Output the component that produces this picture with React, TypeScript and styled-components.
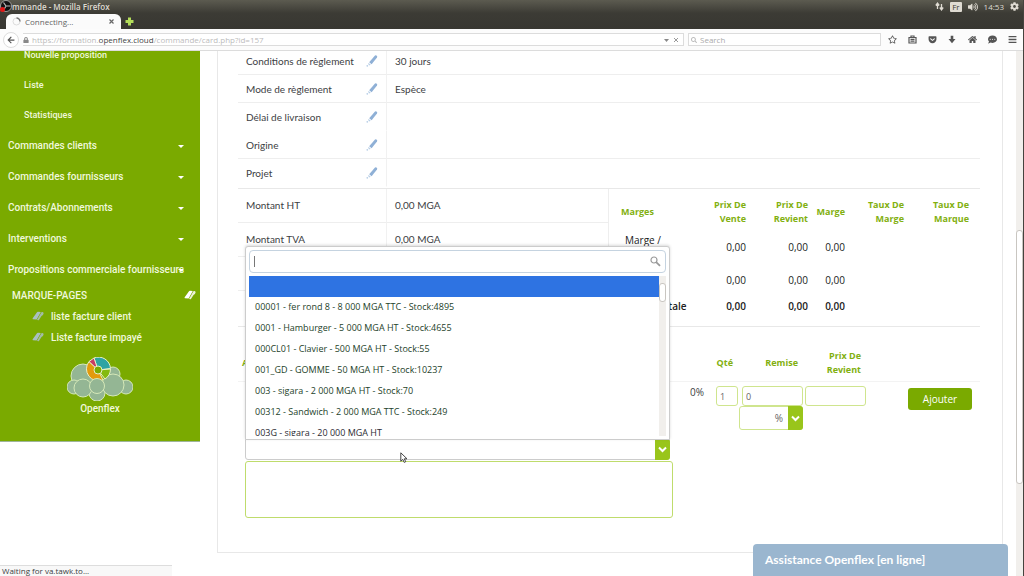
import React from "react";
import styled, { createGlobalStyle, css } from "styled-components";
import { FaRegStar, FaGetPocket, FaHome, FaCommentDots, FaBars, FaArrowLeft, FaLock, FaVolumeUp, FaCog, FaSearch } from "react-icons/fa";

const green = "#7aaa00";
const heading = "#82b010";
const lime = "#99c51b";
const uiFont = `"Open Sans", "Noto Sans", sans-serif`;

const Global = createGlobalStyle`
  * { box-sizing: border-box; }
  html, body, #root { height: 100%; margin: 0; }
  body { background: #fff; font-family: ${uiFont}; font-size: 10px; color: #3c4043; overflow: hidden; }
  button, input, select, textarea { font-family: inherit; font-size: inherit; color: inherit; margin: 0; padding: 0; }
  table { border-spacing: 0; }
  ul { list-style: none; margin: 0; padding: 0; }
  a { color: inherit; text-decoration: none; }
`;

const Window = styled.div`
  display: flex;
  flex-direction: column;
  height: 100vh;
  border-right: 1px solid #45433e;
`;

/* ---------- browser chrome ---------- */
const Chrome = styled.header`
  flex: none;
  background: linear-gradient(#5c5b50, #3c3b35 13px, #33322d);
`;
const TitleBar = styled.div`
  position: relative;
  display: flex;
  align-items: center;
  justify-content: space-between;
  height: 13px;
  padding: 0 4px 0 12px;
  color: #dfdbd2;
  font-size: 8px;
  line-height: 13px;
`;
const Title = styled.span`
  font-weight: 600;
`;
const Recorder = styled.svg`
  position: absolute;
  left: 0;
  top: 0;
`;
const Tray = styled.div`
  display: flex;
  align-items: center;
  gap: 6px;
`;
const Lang = styled.span`
  padding: 0 2px;
  background: #dfdbd2;
  color: #3c3b35;
  border-radius: 1px;
  line-height: 10px;
`;
const Tabs = styled.div`
  display: flex;
  align-items: center;
  gap: 4px;
  height: 16px;
  padding-left: 6px;
`;
const Tab = styled.div`
  display: flex;
  align-items: center;
  gap: 4px;
  width: 115px;
  height: 15px;
  align-self: flex-end;
  padding: 0 7px 0 6px;
  background: #fbfbfb;
  border-radius: 6px 6px 0 0;
  font-size: 8px;
  color: #666;
`;
const TabLabel = styled.span`
  flex: 1;
`;
const PlainButton = styled.button`
  display: flex;
  align-items: center;
  justify-content: center;
  border: 0;
  background: none;
  color: inherit;
`;
const NavBar = styled.nav`
  display: flex;
  align-items: center;
  gap: 4px;
  height: 22px;
  padding: 0 6px 0 3px;
  background: #fcfcfc;
  border-bottom: 1px solid #dcdcdc;
  color: #555;
`;
const Back = styled(PlainButton)`
  width: 16px;
  height: 16px;
  border: 1px solid #ddd;
  border-radius: 50%;
  background: #fff;
`;
const Field = styled.div<{ $fixed?: boolean }>`
  display: flex;
  align-items: center;
  gap: 3px;
  height: 13px;
  padding: 0 3px 0 2px;
  border: 1px solid #dcdcdc;
  background: #fff;
  font-size: 8px;
  color: #bbb;
  ${(p) => (p.$fixed ? css`flex: 0 0 193px;` : css`flex: 1; border-left: 0; padding-left: 0;`)}
`;
const Url = styled.span`
  flex: 1;
  line-height: 11px;
  b { font-weight: 400; color: #444; }
`;
const SearchInput = styled.input`
  flex: 1;
  min-width: 0;
  border: 0;
  outline: 0;
  background: none;
  &::placeholder { color: #aaa; }
`;
const Tools = styled.div`
  display: flex;
  align-items: center;
  justify-content: space-between;
  width: 132px;
  padding-left: 3px;
`;

/* ---------- page ---------- */
const Page = styled.div`
  position: relative;
  display: flex;
  flex: 1;
  min-height: 0;
  overflow: hidden;
`;
const Sidebar = styled.aside`
  flex: 0 0 200px;
  min-width: 0;
  align-self: flex-start;
  padding-bottom: 24px;
  background: ${green};
  border-bottom: 1px solid #9fb59a;
  color: #f0f8dc;
  font-family: Roboto, sans-serif;
  font-weight: 500;
`;
const Menu = styled.ul`
  margin-top: -11px;
`;
const SubItem = styled.li`
  padding-left: 24px;
  font-size: 9px;
  line-height: 30px;
`;
const MenuItem = styled.li`
  position: relative;
  padding-left: 8px;
  font-size: 10px;
  line-height: 31px;
  white-space: nowrap;
  &::after {
    content: "";
    position: absolute;
    right: 16px;
    top: 15px;
    border: 3px solid transparent;
    border-top-color: #fff;
    border-bottom: 0;
  }
`;
const BookmarkTitle = styled.h2`
  display: flex;
  align-items: center;
  justify-content: space-between;
  margin: 0;
  padding: 0 4px 0 12px;
  font-size: 10px;
  font-weight: 500;
  line-height: 21px;
`;
const Bookmark = styled.li`
  display: flex;
  align-items: center;
  gap: 7px;
  padding-left: 32px;
  font-size: 10px;
  line-height: 21px;
`;
const Brand = styled.div`
  display: flex;
  flex-direction: column;
  align-items: center;
  padding-top: 9px;
  font-size: 10px;
  line-height: 16px;
`;
const Main = styled.main`
  flex: 1;
  min-width: 0;
  padding: 0 13px 0 17px;
`;
const Panel = styled.section`
  padding: 0 22px 34px 20px;
  border: 1px solid #e8e8e8;
  border-top: 0;
`;

const Details = styled.table`
  width: 100%;
  margin-top: -4px;
  table-layout: fixed;
  font-family: Lato, sans-serif;
`;
const Label = styled.th<{ $tall?: boolean; $open?: boolean }>`
  width: 149px;
  height: ${(p) => (p.$tall ? 34 : 28)}px;
  padding: 0 8px ${(p) => (p.$tall ? 2 : 0)}px;
  border-right: 1px solid #f1f1f1;
  border-bottom: 1px solid ${(p) => (p.$open ? "transparent" : "#eee")};
  font-weight: 400;
  text-align: left;
  line-height: 14px;
`;
const LabelRow = styled.div`
  display: flex;
  align-items: center;
  justify-content: space-between;
`;
const Value = styled.td<{ $tall?: boolean; $open?: boolean }>`
  padding: 0 8px ${(p) => (p.$tall ? 2 : 0)}px;
  border-bottom: 1px solid ${(p) => (p.$open ? "transparent" : "#eee")};
  line-height: 14px;
`;
const Split = styled.div`
  display: flex;
  height: 139px;
  margin-top: 1px;
  border-top: 1px solid #e8e8e8;
  border-bottom: 1px solid #e8e8e8;
`;
const Totals = styled.table`
  width: 50%;
  align-self: flex-start;
  border-right: 1px solid #eee;
  table-layout: fixed;
  font-family: Lato, sans-serif;
`;
const Margins = styled.table`
  width: 50%;
  align-self: flex-start;
  margin-top: 4px;
  padding-right: 11px;
  table-layout: fixed;
  text-align: right;
  color: #222;
`;
const HeadCell = styled.th<{ $w?: number; $left?: boolean }>`
  width: ${(p) => (p.$w ? `${p.$w}px` : "auto")};
  height: 37px;
  padding: 0;
  color: ${heading};
  font-size: 9px;
  font-weight: 700;
  line-height: 14px;
  text-align: ${(p) => (p.$left ? "left" : "right")};
  ${(p) => p.$left && css`padding-left: 12px;`}
`;
const Num = styled.td<{ $bold?: boolean }>`
  height: ${(p) => (p.$bold ? 20 : 33)}px;
  padding: 0;
  font-weight: ${(p) => (p.$bold ? 600 : 500)};
  line-height: 14px;
`;
const MarginName = styled(Num)`
  padding-left: 16px;
  text-align: left;
  white-space: nowrap;
`;

const LineForm = styled.table`
  width: 100%;
  margin-top: 18px;
  table-layout: fixed;
`;
const FormHead = styled(HeadCell)<{ $pad?: number }>`
  border-bottom: 1px solid #f3f3f3;
  padding-right: ${(p) => p.$pad ?? 0}px;
  ${(p) => p.$left && css`padding-left: 4px;`}
`;
const FormCell = styled.td`
  padding: 4px 0 0;
  vertical-align: top;
  text-align: right;
`;
const Stack = styled.div`
  display: flex;
  flex-direction: column;
  gap: 1px;
  padding: 53px 16px 0 7px;
  text-align: left;
`;
const Picker = styled.div`
  position: relative;
  display: flex;
  height: 21px;
  margin-right: 3px;
  border: 1px solid #ccc;
  border-radius: 0 0 3px 3px;
`;
const NativeSelect = styled.select`
  flex: 1;
  min-width: 0;
  appearance: none;
  border: 0;
  background: none;
  outline: 0;
  text-align-last: right;
  padding-right: 6px;
`;
const Arrow = styled.span`
  display: flex;
  align-items: center;
  justify-content: center;
  flex: 0 0 15px;
  margin: -1px;
  background: ${lime};
  border-radius: 0 3px 3px 0;
`;
const Popup = styled.div`
  position: absolute;
  left: -1px;
  right: -1px;
  bottom: 100%;
  padding: 3px;
  background: #fff;
  border: 1px solid #ccc;
  border-radius: 3px 3px 0 0;
  box-shadow: 0 -1px 3px rgba(0, 0, 0, 0.15);
  color: #24422a;
`;
const Filter = styled.label`
  display: flex;
  align-items: center;
  height: 23px;
  padding: 0 4px;
  border: 1px solid #c5d3e0;
  border-radius: 4px;
`;
const Caret = styled.span`
  width: 1px;
  height: 11px;
  background: #777;
`;
const ListBox = styled.div`
  display: flex;
  height: 160px;
  margin-top: 3px;
`;
const Options = styled.ul`
  flex: 1;
  overflow: hidden;
`;
const Option = styled.li<{ $active?: boolean; $dark?: boolean }>`
  height: 21px;
  padding-left: 6px;
  font-size: 9px;
  line-height: 20px;
  white-space: nowrap;
  background: ${(p) => (p.$active ? "#2e73e2" : "none")};
  color: ${(p) => (p.$dark ? "#2b2b33" : "inherit")};
`;
const Track = styled.div<{ $top: number; $size: number }>`
  flex: 0 0 7px;
  padding-top: ${(p) => p.$top}px;
  background: #f1efec;
  &::before {
    content: "";
    display: block;
    height: ${(p) => p.$size}px;
    background: #fff;
    border: 1px solid #c9c6c1;
    border-radius: 3px;
  }
`;
const Pointer = styled.svg`
  position: absolute;
  left: 154px;
  top: 12px;
`;
const Note = styled.textarea`
  display: block;
  width: 100%;
  height: 57px;
  border: 1px solid #bfdc6c;
  border-radius: 3px;
  resize: none;
  outline: 0;
`;
const Box = styled.input<{ $w: number }>`
  width: ${(p) => p.$w}px;
  height: 20px;
  padding: 0 3px;
  border: 1px solid #cfe58e;
  border-radius: 3px;
  outline: 0;
  font-size: 9px;
  color: #666;
`;
const UnitSelect = styled.div`
  display: flex;
  width: 64px;
  height: 24px;
  margin-left: auto;
  border: 1px solid #cfe58e;
  border-radius: 3px;
  color: #666;
`;
const Rate = styled.td`
  padding: 0 7px 0 0;
  vertical-align: top;
  line-height: 20px;
  text-align: right;
`;
const Discount = styled.div`
  display: flex;
  flex-direction: column;
  align-items: flex-end;
`;
const AddButton = styled.button`
  width: 64px;
  height: 22px;
  margin: 2px 8px 0 0;
  border: 0;
  border-radius: 3px;
  background: ${green};
  color: #fff;
`;
const Chat = styled.button`
  position: absolute;
  right: 15px;
  bottom: 0;
  width: 255px;
  height: 32px;
  padding-left: 12px;
  border: 0;
  border-radius: 4px 4px 0 0;
  background: #9ab6cf;
  color: #fff;
  font: 700 12px/32px Lato, sans-serif;
  text-align: left;
`;
const Status = styled.div`
  position: absolute;
  left: 0;
  bottom: 0;
  width: 172px;
  padding-left: 2px;
  background: #f8f8f8;
  border-top: 1px solid #ddd;
  font-size: 8px;
  line-height: 10px;
`;

const Pencil = () => (
  <svg width="12" height="12" viewBox="0 0 12 12" aria-hidden="true">
    <path d="M9 .5Q10 0 10.800.8 11.600 1.600 11 2.600L5.600 9.200 3.200 7.200z" fill="#8fb0d6" />
    <path d="M2.700 7.900 4.700 9.700 3.500 10.400 2 9z" fill="#b9cfe6" />
    <circle cx="1.300" cy="10.800" r=".9" fill="#b9cfe6" />
  </svg>
);
const Books = ({ color }: { color: string }) => (
  <svg width="12" height="11" viewBox="0 0 12 11" aria-hidden="true">
    <path d="M5 1.200Q5.400.600 6 .7L8.800.9 4.600 8.600 1 8.300Q.2 8 .7 7.200z" fill={color} />
    <path d="M9.400 1.200Q11.600.8 11.600 2.400 11.300 4 9.500 5L6.800 9.200 5 9z" fill={color} opacity=".85" />
  </svg>
);
const Chevron = () => (
  <svg width="9" height="7" viewBox="0 0 9 7" aria-hidden="true">
    <path d="M1 1.500 4.500 5 8 1.500" fill="none" stroke="#fff" strokeWidth="2" />
  </svg>
);
const Logo = () => (
  <svg width="66" height="44" viewBox="0 0 66 44" aria-hidden="true">
    <g fill="#94b694" stroke="#d5e8b8" strokeWidth="1">
      <circle cx="16" cy="19" r="12" />
      <circle cx="46" cy="17" r="7" />
      <circle cx="7" cy="30" r="7" />
      <circle cx="59" cy="30" r="7" />
      <circle cx="30" cy="36" r="8" />
      <circle cx="16" cy="31" r="9" />
      <circle cx="46" cy="28" r="11" />
    </g>
    <g stroke="#e6efc8" strokeWidth="1">
      <path d="M31 13 27 1A12 12 0 0 1 43.500 11.500z" fill="#2fa3a3" />
      <path d="M31 13 43.500 12A12 12 0 0 1 38 22z" fill="#84ba10" />
      <path d="M31 13 36 23A12 12 0 0 1 22 4.500z" fill="#e39a0c" />
      <path d="M31 13 22 4.500 27 1z" fill="#c83a63" />
      <circle cx="31" cy="13" r="4" fill={green} />
    </g>
    <circle cx="30" cy="29" r="7.500" fill="#94b694" stroke="#d5e8b8" />
  </svg>
);

const fields = [
  { name: "Conditions de règlement", value: "30 jours" },
  { name: "Mode de règlement", value: "Espèce" },
  { name: "Délai de livraison", value: "", open: true },
  { name: "Origine", value: "" },
  { name: "Projet", value: "", open: true },
];
const options = [
  "00001 - fer rond 8 - 8 000 MGA TTC - Stock:4895",
  "0001 - Hamburger - 5 000 MGA HT - Stock:4655",
  "000CL01 - Clavier - 500 MGA HT - Stock:55",
  "001_GD - GOMME - 50 MGA HT - Stock:10237",
  "003 - sigara - 2 000 MGA HT - Stock:70",
  "00312 - Sandwich - 2 000 MGA TTC - Stock:249",
  "003G - sigara - 20 000 MGA HT",
];
const menu = ["Commandes clients", "Commandes fournisseurs", "Contrats/Abonnements", "Interventions", "Propositions commerciale fournisseurs"];

const Browser = () => (
  <Chrome>
    <TitleBar>
      <Recorder width="13" height="13" viewBox="0 0 13 13" aria-hidden="true">
        <circle cx="6" cy="6" r="5.500" fill="#111" stroke="#ccc" strokeWidth=".7" />
        <path d="M6 6 3.500 2.500M6 6h4.500M6 6 4 9.500" stroke="#bbb" strokeWidth="1.200" />
        <circle cx="2.500" cy="9.500" r="2.500" fill="#e01818" />
      </Recorder>
      <Title>mmande - Mozilla Firefox</Title>
      <Tray>
        <svg width="9" height="9" viewBox="0 0 9 9" aria-hidden="true">
          <path d="M2.500 7V2M.8 3.500 2.500 1.200 4.200 3.500M6.500 2v5M4.800 5.500 6.500 7.800 8.200 5.500" fill="none" stroke="#dfdbd2" strokeWidth="1.300" />
        </svg>
        <Lang>Fr</Lang>
        <FaVolumeUp size={10} />
        <span>14:53</span>
        <FaCog size={9} />
      </Tray>
    </TitleBar>
    <Tabs>
      <Tab>
        <svg width="9" height="9" viewBox="0 0 9 9" aria-hidden="true">
          <circle cx="4.500" cy="4.500" r="3.500" fill="none" stroke="#ddd" />
          <path d="M4.500 1A3.500 3.500 0 0 1 8 4.500" fill="none" stroke="#777" strokeWidth="1.300" />
        </svg>
        <TabLabel>Connecting...</TabLabel>
        <PlainButton aria-label="Fermer l'onglet">
          <svg width="5" height="5" viewBox="0 0 5 5"><path d="M.5.5l4 4M4.500.5l-4 4" stroke="#666" strokeWidth="1.200" /></svg>
        </PlainButton>
      </Tab>
      <PlainButton aria-label="Nouvel onglet">
        <svg width="9" height="9" viewBox="0 0 9 9"><path d="M4.500.5v8M.5 4.500h8" stroke="#b4de5a" strokeWidth="3" /></svg>
      </PlainButton>
    </Tabs>
    <NavBar>
      <Back aria-label="Retour"><FaArrowLeft size={8} /></Back>
      <Field>
        <FaLock size={6} color="#888" />
        <Url>https://formation.<b>openflex.cloud</b>/commande/card.php?id=157</Url>
        <svg width="16" height="6" viewBox="0 0 16 6" aria-hidden="true">
          <path d="M0 2h5L2.500 5z" fill="#888" />
          <path d="M10 1l4 4M14 1l-4 4" stroke="#999" />
        </svg>
      </Field>
      <Field as="label" $fixed>
        <FaSearch size={6} />
        <SearchInput placeholder="Search" aria-label="Search" />
      </Field>
      <Tools>
        <PlainButton aria-label="Favori"><FaRegStar size={9} /></PlainButton>
        <PlainButton aria-label="Liste">
          <svg width="9" height="9" viewBox="0 0 9 9"><path d="M1 2.500h7v5.500h-7zM3 2.500v-1.500h3v1.500M2.500 4.300h4M2.500 6.200h4" fill="none" stroke="#555" strokeWidth="1.200" /></svg>
        </PlainButton>
        <PlainButton aria-label="Pocket"><FaGetPocket size={9} /></PlainButton>
        <PlainButton aria-label="Téléchargements">
          <svg width="8" height="9" viewBox="0 0 8 9"><path d="M2.700.8h2.600v3.200h2.200L4 8.200.5 4h2.200z" fill="#555" /></svg>
        </PlainButton>
        <PlainButton aria-label="Accueil"><FaHome size={9} /></PlainButton>
        <PlainButton aria-label="Discussion"><FaCommentDots size={9} /></PlainButton>
        <PlainButton aria-label="Menu"><FaBars size={9} /></PlainButton>
      </Tools>
    </NavBar>
  </Chrome>
);

const SideMenu = () => (
  <Sidebar>
    <Menu>
      {["Nouvelle proposition", "Liste", "Statistiques"].map((t) => (
        <SubItem key={t}><a href="#">{t}</a></SubItem>
      ))}
      {menu.map((t) => (
        <MenuItem key={t}><a href="#">{t}</a></MenuItem>
      ))}
    </Menu>
    <BookmarkTitle>MARQUE-PAGES <Books color="#fff" /></BookmarkTitle>
    <ul>
      {["liste facture client", "Liste facture impayé"].map((t) => (
        <Bookmark key={t}><Books color="#a9bfc4" /><a href="#">{t}</a></Bookmark>
      ))}
    </ul>
    <Brand><Logo />Openflex</Brand>
  </Sidebar>
);

const ProductPicker = () => (
  <Picker>
    <NativeSelect aria-label="Produit" />
    <Arrow><Chevron /></Arrow>
    <Popup>
      <Filter>
        <Caret />
        <SearchInput aria-label="Rechercher un produit" />
        <svg width="11" height="11" viewBox="0 0 11 11" aria-hidden="true">
          <circle cx="4" cy="4" r="3" fill="none" stroke="#999" strokeWidth="1.200" />
          <path d="M6.200 6.200 10 9.800" stroke="#999" strokeWidth="1.800" />
        </svg>
      </Filter>
      <ListBox>
        <Options role="listbox">
          <Option role="option" $active aria-selected="true" />
          {options.map((o, i) => (
            <Option key={o} role="option" aria-selected="false" $dark={i === 6}>{o}</Option>
          ))}
        </Options>
        <Track $top={7} $size={17} />
      </ListBox>
    </Popup>
    <Pointer width="8" height="12" viewBox="0 0 8 12" aria-hidden="true">
      <path d="M.8.8v8.400l2-1.800 1.400 3 1.500-.7-1.400-2.900h2.700z" fill="#fff" stroke="#333" strokeWidth=".9" />
    </Pointer>
  </Picker>
);

export default function App() {
  return (
    <Window>
      <Global />
      <Browser />
      <Page>
        <SideMenu />
        <Main>
          <Panel>
            <Details>
              <tbody>
                {fields.map((f) => (
                  <tr key={f.name}>
                    <Label scope="row" $open={f.open}>
                      <LabelRow>{f.name}<Pencil /></LabelRow>
                    </Label>
                    <Value $open={f.open}>{f.value}</Value>
                  </tr>
                ))}
              </tbody>
            </Details>
            <Split>
              <Totals>
                <tbody>
                  {["Montant HT", "Montant TVA", "Montant TTC"].map((t) => (
                    <tr key={t}>
                      <Label scope="row" $tall>{t}</Label>
                      <Value $tall>0,00 MGA</Value>
                    </tr>
                  ))}
                </tbody>
              </Totals>
              <Margins>
                <thead>
                  <tr>
                    <HeadCell $left>Marges</HeadCell>
                    <HeadCell $w={60}>Prix De<br />Vente</HeadCell>
                    <HeadCell $w={62}>Prix De<br />Revient</HeadCell>
                    <HeadCell $w={37}>Marge</HeadCell>
                    <HeadCell $w={59}>Taux De<br />Marge</HeadCell>
                    <HeadCell $w={65}>Taux De<br />Marque</HeadCell>
                  </tr>
                </thead>
                <tbody>
                  {["Produits", "Services"].map((t) => (
                    <tr key={t}>
                      <MarginName>Marge /<br />{t}</MarginName>
                      <Num>0,00</Num><Num>0,00</Num><Num>0,00</Num><Num /><Num />
                    </tr>
                  ))}
                  <tr>
                    <MarginName $bold>Marge totale</MarginName>
                    <Num $bold>0,00</Num><Num $bold>0,00</Num><Num $bold>0,00</Num><Num $bold /><Num $bold />
                  </tr>
                </tbody>
              </Margins>
            </Split>
            <LineForm>
              <thead>
                <tr>
                  <FormHead $left>A</FormHead>
                  <FormHead $w={22} />
                  <FormHead $w={27} $pad={5}>Qté</FormHead>
                  <FormHead $w={65} $pad={5}>Remise</FormHead>
                  <FormHead $w={63} $pad={5}>Prix De<br />Revient</FormHead>
                  <FormHead $w={114} />
                </tr>
              </thead>
              <tbody>
                <tr>
                  <FormCell>
                    <Stack>
                      <ProductPicker />
                      <Note aria-label="Description" />
                    </Stack>
                  </FormCell>
                  <Rate>0%</Rate>
                  <FormCell><Box $w={22} defaultValue="1" aria-label="Quantité" /></FormCell>
                  <FormCell>
                    <Discount>
                      <Box $w={61} defaultValue="0" aria-label="Remise" />
                      <UnitSelect>
                        <NativeSelect aria-label="Unité"><option>%</option></NativeSelect>
                        <Arrow><Chevron /></Arrow>
                      </UnitSelect>
                    </Discount>
                  </FormCell>
                  <FormCell><Box $w={61} aria-label="Prix de revient" /></FormCell>
                  <FormCell><AddButton>Ajouter</AddButton></FormCell>
                </tr>
              </tbody>
            </LineForm>
          </Panel>
        </Main>
        <Track $top={179} $size={252} />
        <Chat>Assistance Openflex [en ligne]</Chat>
        <Status>Waiting for va.tawk.to...</Status>
      </Page>
    </Window>
  );
}
